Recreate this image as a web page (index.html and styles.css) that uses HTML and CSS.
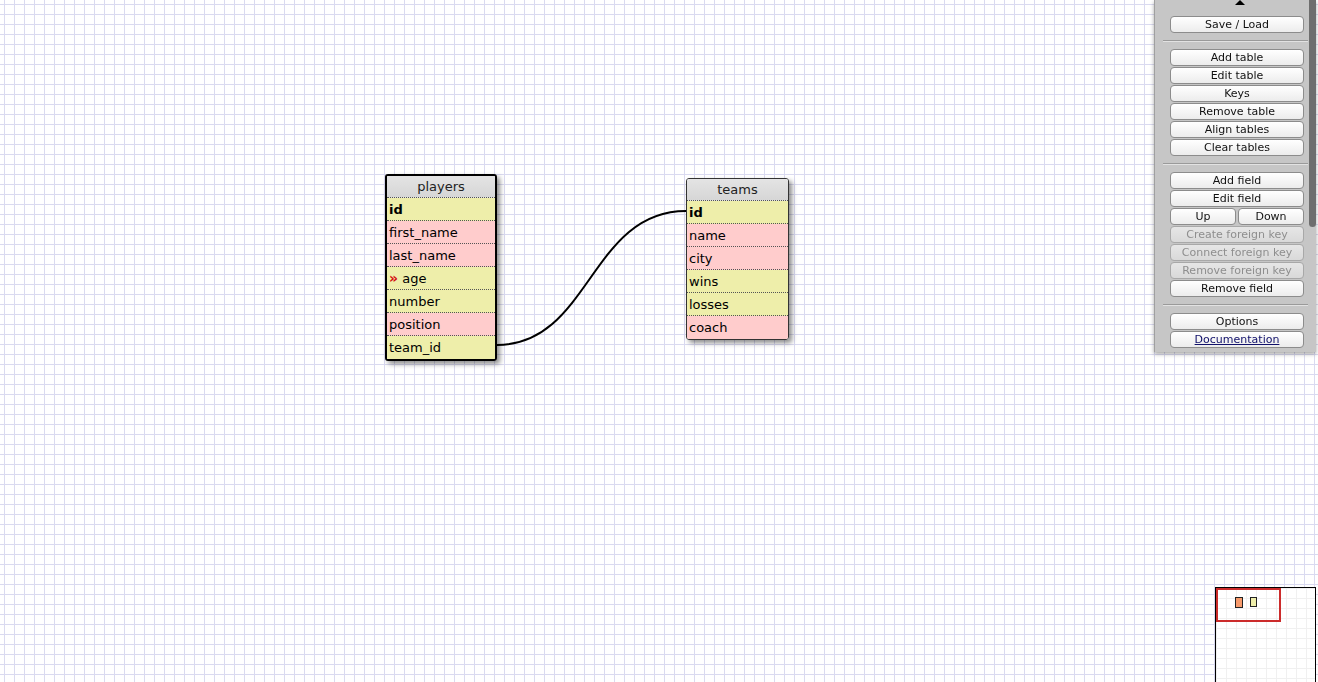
FILE: index.html
```html
<!DOCTYPE html>
<html lang="en">
<head>
  <meta charset="UTF-8" />
  <title>WWW SQL Designer</title>
  <link rel="stylesheet" href="styles.css">
</head>
<body>

  <div class="area">
    <svg class="relations" width="1318" height="682">
      <path d="M 497 345 C 590 345, 590 211, 686 211" />
    </svg>

    <div class="table table-players selected">
      <div class="title">players</div>
      <div class="row key yellow">id</div>
      <div class="row pink">first_name</div>
      <div class="row pink">last_name</div>
      <div class="row yellow"><span class="fk">&raquo;</span> age</div>
      <div class="row yellow">number</div>
      <div class="row pink">position</div>
      <div class="row yellow">team_id</div>
    </div>

    <div class="table table-teams">
      <div class="title">teams</div>
      <div class="row key yellow">id</div>
      <div class="row pink">name</div>
      <div class="row pink">city</div>
      <div class="row yellow">wins</div>
      <div class="row yellow">losses</div>
      <div class="row pink">coach</div>
    </div>
  </div>

  <div class="bar">
    <div class="toggle"></div>
    <div class="group">
      <button>Save / Load</button>
    </div>
    <hr />
    <div class="group">
      <button>Add table</button>
      <button>Edit table</button>
      <button>Keys</button>
      <button>Remove table</button>
      <button>Align tables</button>
      <button>Clear tables</button>
    </div>
    <hr />
    <div class="group">
      <button>Add field</button>
      <button>Edit field</button>
      <div class="pair">
        <button>Up</button>
        <button>Down</button>
      </div>
      <button disabled>Create foreign key</button>
      <button disabled>Connect foreign key</button>
      <button disabled>Remove foreign key</button>
      <button>Remove field</button>
    </div>
    <hr />
    <div class="group">
      <button>Options</button>
      <button class="doc">Documentation</button>
    </div>
    <div class="scroll-thumb"></div>
  </div>

  <div class="minimap">
    <div class="mini-table mini-players"></div>
    <div class="mini-table mini-teams"></div>
    <div class="viewport"></div>
  </div>

</body>
</html>
```

FILE: styles.css
```css
:root {
  --grid: #dadaf0;
  --yellow: #eeeeaa;
  --pink: #ffcccc;
  --text: #000;
}

body {
  margin: 0;
  overflow: hidden;
  font-family: 'DejaVu Sans', sans-serif;
  color: var(--text);
  background-color: #fff;
  background-image:
    linear-gradient(to right, var(--grid) 1px, transparent 1px),
    linear-gradient(to bottom, var(--grid) 1px, transparent 1px);
  background-size: 10px 10px;
  background-position: 4px 4px;
}

.area {
  position: relative;
  width: 1318px;
  height: 682px;
}

.relations {
  position: absolute;
  top: 0;
  left: 0;
}

.relations path {
  fill: none;
  stroke: #000;
  stroke-width: 2;
}

/* tables on the canvas */
.table {
  position: absolute;
  font-size: 13px;
  border: 1px solid #333;
  border-radius: 3px;
  overflow: hidden;
  box-shadow: 3px 3px 5px rgba(0,0,0,0.45);
}

.table.selected {
  border: 2px solid #000;
}

.table-players {
  left: 385px;
  top: 174px;
  width: 108px;
}

.table-teams {
  left: 686px;
  top: 178px;
  width: 101px;
}

.title {
  height: 21px;
  line-height: 22px;
  text-align: center;
  color: #222;
  background: linear-gradient(#e4e4e4, #d6d6d6);
  border-bottom: 1px dotted #555;
}

.row {
  height: 22px;
  line-height: 23px;
  padding-left: 2px;
  border-bottom: 1px dotted #555;
  white-space: nowrap;
}

.row:last-child {
  border-bottom: none;
  height: 23px;
}

.yellow { background: var(--yellow); }
.pink { background: var(--pink); }

.key {
  font-weight: bold;
}

.fk {
  color: #d41010;
  font-weight: bold;
  font-size: 14px;
  letter-spacing: -1px;
  margin-right: 1px;
}

/* side bar */
.bar {
  position: fixed;
  top: 0;
  left: 1154px;
  width: 161px;
  padding-bottom: 4px;
  background: #c6c6c6;
  border-left: 1px solid #a0a0a0;
  box-shadow: 0 2px 4px rgba(0,0,0,0.35);
}

.toggle {
  width: 0;
  height: 0;
  margin: 0 auto 11px 80px;
  border-left: 5px solid transparent;
  border-right: 5px solid transparent;
  border-bottom: 5px solid #000;
}

.group {
  display: flex;
  flex-direction: column;
  gap: 1px;
  width: 134px;
  margin-left: 15px;
}

.pair {
  display: flex;
  gap: 2px;
}

.pair button {
  flex: 1;
}

button {
  height: 17px;
  padding: 0;
  font-family: 'DejaVu Sans', sans-serif;
  font-size: 11px;
  line-height: 15px;
  color: #111;
  background: linear-gradient(#ffffff, #ececec);
  border: 1px solid #8c8c8c;
  border-radius: 4px;
}

button:disabled {
  color: #8e8e8e;
  background: linear-gradient(#e6e6e6, #d9d9d9);
  border-color: #a8a8a8;
}

button.doc {
  color: #10106a;
  text-decoration: underline;
}

hr {
  margin: 7px 8px;
  height: 0;
  border: none;
  border-top: 1px solid #9a9a9a;
  border-bottom: 1px solid #e2e2e2;
}

.scroll-thumb {
  position: absolute;
  top: 0;
  right: 0;
  width: 7px;
  height: 227px;
  background: #6e6e6e;
  border-radius: 0 0 4px 4px;
}

/* mini map */
.minimap {
  position: fixed;
  left: 1215px;
  top: 587px;
  width: 99px;
  height: 120px;
  border: 1px solid #000;
  background-color: #fff;
  background-image:
    linear-gradient(to right, #f0f0f0 1px, transparent 1px),
    linear-gradient(to bottom, #f0f0f0 1px, transparent 1px);
  background-size: 10px 10px;
}

.mini-table {
  position: absolute;
  border: 1px solid #222;
}

.mini-players {
  left: 19px;
  top: 9px;
  width: 6px;
  height: 9px;
  background: #f79a6c;
}

.mini-teams {
  left: 34px;
  top: 9px;
  width: 5px;
  height: 8px;
  background: var(--yellow);
}

.viewport {
  position: absolute;
  left: 0;
  top: 0;
  width: 61px;
  height: 30px;
  border: 2px solid #cc2b2b;
}
```
